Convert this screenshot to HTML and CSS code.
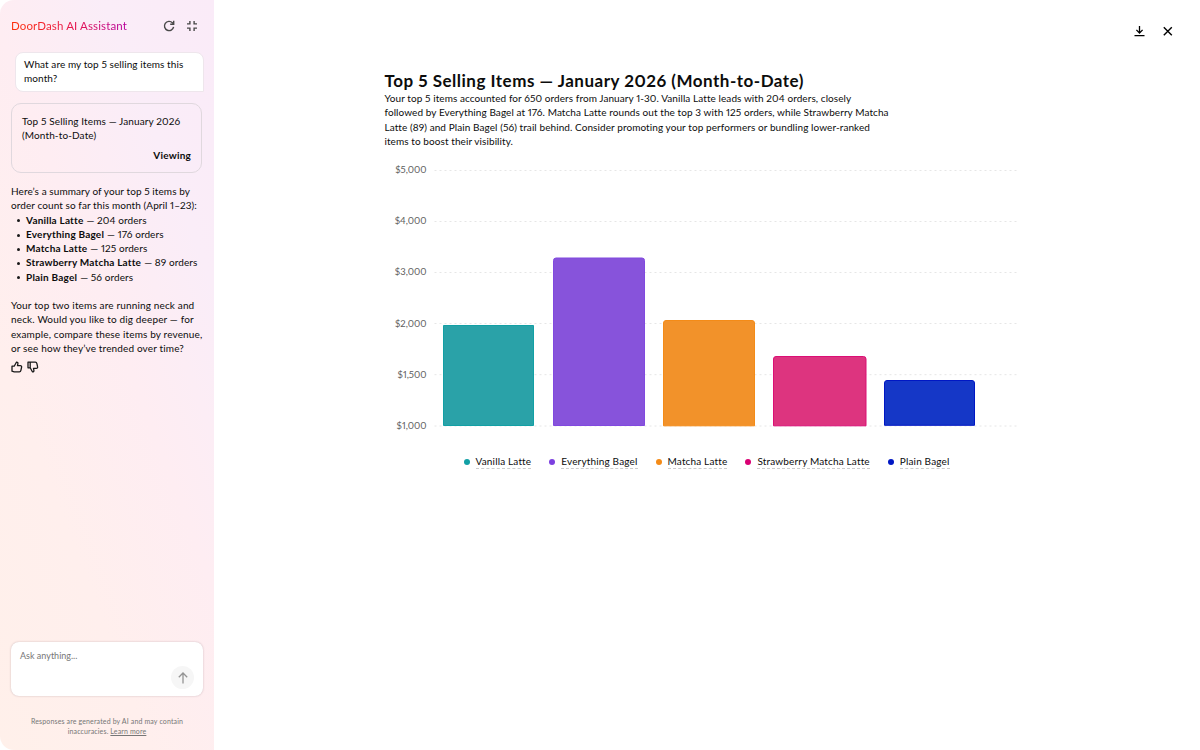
FILE: index.html
```html
<!DOCTYPE html>
<html lang="en">
<head>
    <meta charset="UTF-8">
    <meta name="viewport" content="width=device-width, initial-scale=1.0">
    <title>DoorDash AI Assistant</title>
    <link rel="stylesheet" href="styles.css">
</head>
<body>
<div class="app">
    <aside class="sidebar">
        <header class="sidebar-header">
            <h1 class="brand">DoorDash AI Assistant</h1>
            <div class="header-icons">
                <svg width="12" height="12" viewBox="0 0 12 12" fill="none" stroke="#494949" stroke-width="1.4">
                    <path d="M10.6 6.8A4.6 4.6 0 1 1 9.4 2.8L10.4 3.9"/>
                    <path d="M10.7 0.8V4.3H7.2"/>
                </svg>
                <svg width="12" height="12" viewBox="0 0 12 12" fill="none" stroke="#494949" stroke-width="1.4">
                    <path d="M3.9 1V3.9H1M8.1 1V3.9H11M3.9 11V8.1H1M8.1 11V8.1H11"/>
                </svg>
            </div>
        </header>

        <div class="user-message">What are my top 5 selling items this<br>month?</div>

        <div class="report-card">
            <div class="report-title">Top 5 Selling Items — January 2026<br>(Month-to-Date)</div>
            <div class="report-status">Viewing</div>
        </div>

        <div class="answer">
            <p>Here’s a summary of your top 5 items by<br>order count so far this month (April 1–23):</p>
            <ul>
                <li><b>Vanilla Latte</b> — 204 orders</li>
                <li><b>Everything Bagel</b> — 176 orders</li>
                <li><b>Matcha Latte</b> — 125 orders</li>
                <li><b>Strawberry Matcha Latte</b> — 89 orders</li>
                <li><b>Plain Bagel</b> — 56 orders</li>
            </ul>
            <p class="follow-up">Your top two items are running neck and<br>neck. Would you like to dig deeper — for<br>example, compare these items by revenue,<br>or see how they’ve trended over time?</p>
        </div>

        <div class="feedback">
            <svg width="12" height="12" viewBox="0 0 12 12" fill="none" stroke="#191919" stroke-width="1.3" stroke-linejoin="round">
                <path d="M1 5.2H3.2L5.4 1.2C6.5 1 7.1 1.8 6.9 2.7L6.5 4.6H9.3C10.3 4.6 10.8 5.3 10.6 6.1L9.9 9.3C9.7 10.3 9.2 10.8 8.3 10.8H3.2L1 10.2Z"/>
            </svg>
            <svg width="12" height="12" viewBox="0 0 12 12" fill="none" stroke="#191919" stroke-width="1.3" stroke-linejoin="round">
                <path d="M1 6.8H3.2L5.4 10.8C6.5 11 7.1 10.2 6.9 9.3L6.5 7.4H9.3C10.3 7.4 10.8 6.7 10.6 5.9L9.9 2.7C9.7 1.7 9.2 1.2 8.3 1.2H1ZM3.2 6.8V1.2"/>
            </svg>
        </div>

        <div class="prompt">
            <span class="placeholder">Ask anything...</span>
            <button class="send" aria-label="Send">
                <svg width="12" height="12" viewBox="0 0 12 12" fill="none" stroke="#949494" stroke-width="1.3">
                    <path d="M6 11.5V1.2M1.8 5.2L6 1L10.2 5.2"/>
                </svg>
            </button>
        </div>

        <p class="disclaimer">Responses are generated by AI and may contain<br>inaccuracies. <a href="#">Learn more</a></p>
    </aside>

    <main class="content">
        <div class="toolbar">
            <svg width="12" height="12" viewBox="0 0 12 12" fill="none" stroke="#000" stroke-width="1.3">
                <path d="M5.5 1V8M2.4 4.9L5.5 8L8.6 4.9M0.5 10.6H10.5"/>
            </svg>
            <svg width="12" height="12" viewBox="0 0 12 12" fill="none" stroke="#000" stroke-width="1.4">
                <path d="M1.8 2.3L9.8 10.3M9.8 2.3L1.8 10.3"/>
            </svg>
        </div>

        <section class="report">
            <h2>Top 5 Selling Items — January 2026 (Month-to-Date)</h2>
            <p class="summary">Your top 5 items accounted for 650 orders from January 1-30. Vanilla Latte leads with 204 orders, closely<br>followed by Everything Bagel at 176. Matcha Latte rounds out the top 3 with 125 orders, while Strawberry Matcha<br>Latte (89) and Plain Bagel (56) trail behind. Consider promoting your top performers or bundling lower-ranked<br>items to boost their visibility.</p>

            <svg class="chart" width="640" height="276" viewBox="0 0 640 276">
                <g class="axis">
                    <text x="41.5" y="13">$5,000</text>
                    <text x="41.5" y="64">$4,000</text>
                    <text x="41.5" y="115.4">$3,000</text>
                    <text x="41.5" y="166.6">$2,000</text>
                    <text x="41.5" y="218">$1,500</text>
                    <text x="41.5" y="269">$1,000</text>
                </g>
                <g class="grid">
                    <path d="M49.5 10.5H632M49.5 61.5H632M49.5 112.5H632M49.5 163.5H632M49.5 214.7H632M49.5 266H632"/>
                </g>
                <!-- bars: rounded on top, square on the baseline -->
                <path fill="#2aa2a8" stroke="#12a0a5" d="M58.5 265.5V165.5H148.5V265.5Z"/>
                <path fill="#8753db" stroke="#8149df" d="M168.5 265.5V100.5Q168.5 98 171 98H257Q259.5 98 259.5 100.5V265.5Z"/>
                <path fill="#f2922a" stroke="#f48b17" d="M278.5 265.8V163Q278.5 160.5 281 160.5H367Q369.5 160.5 369.5 163V265.8Z"/>
                <path fill="#dd347f" stroke="#db0f75" d="M388.5 265.8V199Q388.5 196.5 391 196.5H478.5Q481 196.5 481 199V265.8Z"/>
                <path fill="#1537c7" stroke="#0017c4" d="M499.5 265.3V223Q499.5 220.5 502 220.5H587Q589.5 220.5 589.5 223V265.3Z"/>
            </svg>

            <div class="legend">
                <span class="legend-item vanilla"><span>Vanilla Latte</span></span>
                <span class="legend-item everything"><span>Everything Bagel</span></span>
                <span class="legend-item matcha"><span>Matcha Latte</span></span>
                <span class="legend-item strawberry"><span>Strawberry Matcha Latte</span></span>
                <span class="legend-item plain"><span>Plain Bagel</span></span>
            </div>
        </section>
    </main>
</div>
</body>
</html>
```
FILE: styles.css
```css
* {
    box-sizing: border-box;
}

body {
    margin: 0;
    font-family: Lato, "Open Sans", sans-serif;
    font-size: 10px;
    line-height: 14.3px;
    letter-spacing: 0.08px;
    font-variant-numeric: proportional-nums;
    color: #0c0c0c;
    background: #fff;
}

h1, h2, p, ul {
    margin: 0;
    padding: 0;
}

svg {
    display: block;
}

.app {
    display: flex;
    height: 750px;
    overflow: hidden;
}

.sidebar {
    display: flex;
    flex-direction: column;
    width: 214px;
    padding: 18px 11px 14px;
    border-radius: 14px 0 0 14px;
    background: linear-gradient(69deg, #fff0ea 0%, #ffefed 30%, #feedf2 55%, #faedf8 78%, #faebf8 100%);
}

.sidebar-header {
    display: flex;
    justify-content: space-between;
    height: 16px;
    align-items: center;
    padding-right: 5px;
}

.brand {
    font-size: 11.5px;
    font-weight: 400;
    letter-spacing: 0.12px;
    background: linear-gradient(90deg, #ff3008, #e5154f 55%, #b5009c);
    -webkit-background-clip: text;
    background-clip: text;
    color: transparent;
}

.header-icons {
    display: flex;
    gap: 11px;
}

.user-message {
    margin: 18px 0 0 4px;
    width: 189px;
    height: 40px;
    padding: 4px 8px;
    background: #fff;
    border: 1px solid #eee6ec;
    border-radius: 8px 8px 0 8px;
}

.report-card {
    margin-top: 11px;
    width: 191px;
    height: 70px;
    padding: 10px;
    border: 1px solid #e0d8de;
    border-radius: 10px;
}

.report-title {
    letter-spacing: 0.12px;
}

.report-status {
    margin-top: 5px;
    text-align: right;
    font-weight: 700;
    letter-spacing: 0.2px;
}

.answer {
    margin-top: 11px;
    white-space: nowrap;
}

.answer ul {
    list-style: none;
    margin-bottom: 14px;
}

.answer li {
    display: flex;
    gap: 3px;
    align-items: center;
}

.answer li b {
    letter-spacing: 0.2px;
}

.answer li::before {
    content: "";
    width: 3px;
    height: 3px;
    margin: 2px 3px 0 6px;
    border-radius: 50%;
    background: #191919;
}

.follow-up {
    letter-spacing: 0.15px;
}

.feedback {
    display: flex;
    gap: 4px;
    margin-top: 6px;
}

.prompt {
    display: flex;
    justify-content: space-between;
    margin-top: auto;
    width: 192px;
    height: 54px;
    padding: 7px 9px;
    border-radius: 8px;
    background: #fff;
    box-shadow: 0 0 2px rgba(80, 40, 60, 0.3);
}

.placeholder {
    font-size: 9px;
    letter-spacing: 0;
    color: #767676;
}

.send {
    display: flex;
    align-items: center;
    justify-content: center;
    align-self: flex-end;
    width: 23px;
    height: 23px;
    padding: 0;
    border: none;
    border-radius: 50%;
    background: #f6f6f6;
}

.disclaimer {
    margin-top: 21px;
    font-size: 7px;
    line-height: 9.4px;
    letter-spacing: 0.14px;
    text-align: center;
    color: #767676;
}

.disclaimer a {
    color: inherit;
}

.content {
    flex: 1;
}

.toolbar {
    display: flex;
    justify-content: flex-end;
    gap: 16px;
    padding: 25px 26px 0 0;
}

.report {
    padding: 34px 0 0 170.5px;
}

.report h2 {
    font-size: 17px;
    line-height: 20px;
    font-weight: 700;
    letter-spacing: 0.5px;
}

.summary {
    letter-spacing: 0.08px;
    white-space: nowrap;
}

.chart {
    margin: 12px 0 0 0.5px;
}

.axis text {
    font-size: 9.5px;
    letter-spacing: 0;
    text-anchor: end;
    fill: #606060;
}

.grid path {
    stroke: #e6e6e6;
    stroke-dasharray: 2 3;
}

.legend {
    display: flex;
    gap: 18px;
    margin: 19px 0 0 79px;
    letter-spacing: 0.16px;
}

.legend-item {
    display: flex;
    align-items: center;
    gap: 6px;
}

.legend-item::before {
    content: "";
    width: 6px;
    height: 6px;
    border-radius: 50%;
}

.legend-item span {
    border-bottom: 1px dashed #ccc;
    line-height: 13px;
}

.vanilla::before { background: #12a0a5; }
.everything::before { background: #7c40e0; }
.matcha::before { background: #f48b17; }
.strawberry::before { background: #d90073; }
.plain::before { background: #0017c4; }
```
